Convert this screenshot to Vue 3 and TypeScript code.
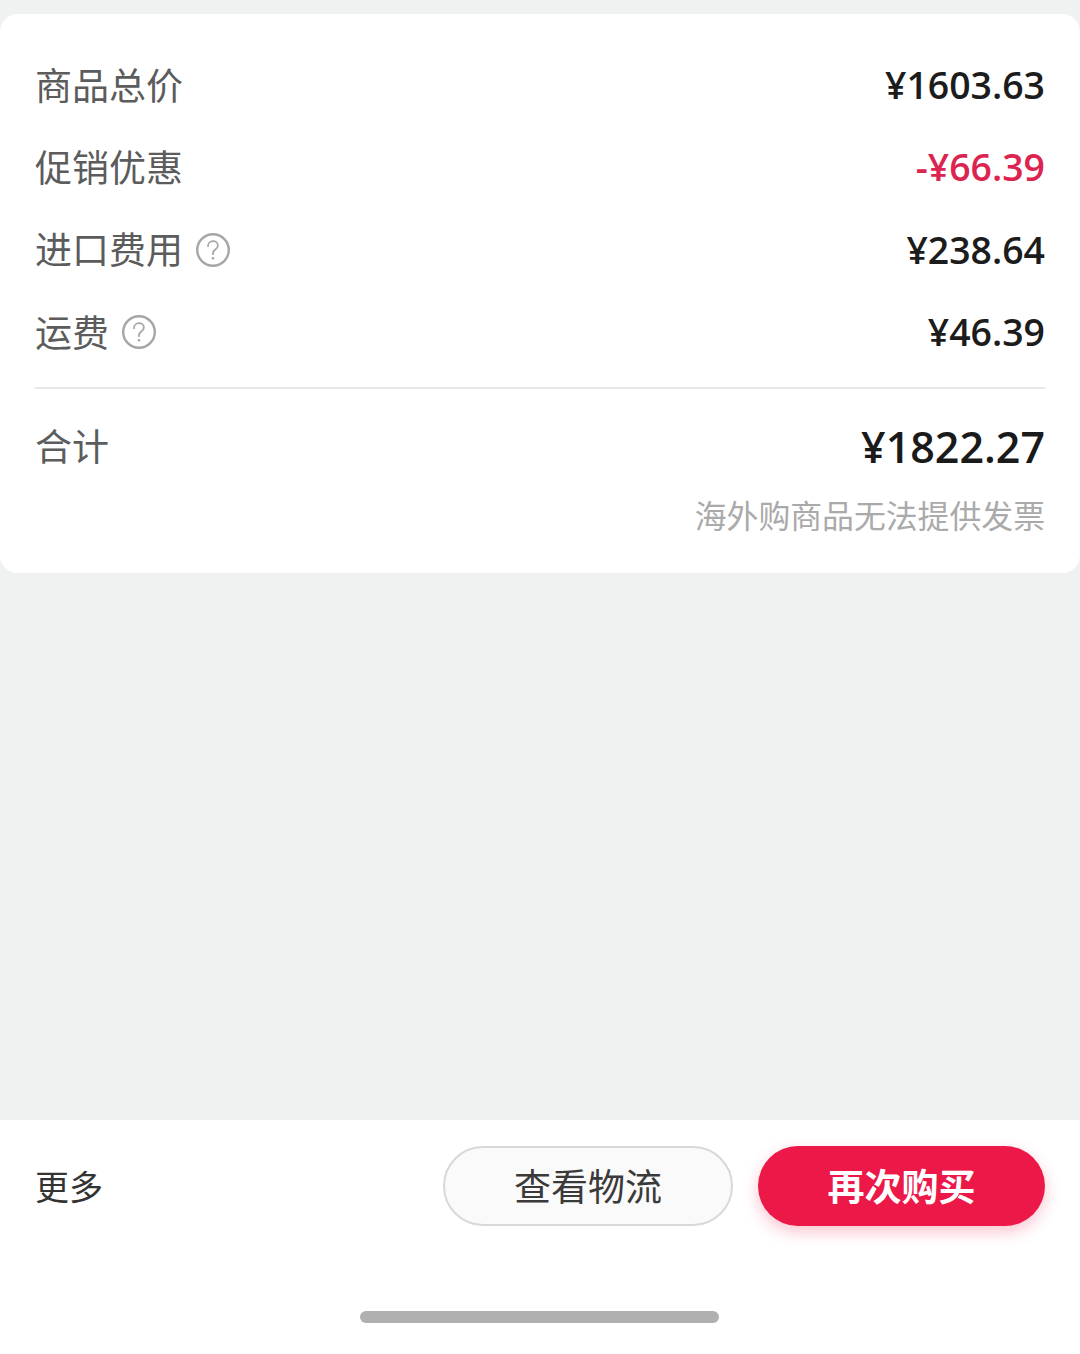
<script setup lang="ts">
interface FeeRow {
  label: string
  value: string
  help?: boolean
  discount?: boolean
}

const rows: FeeRow[] = [
  { label: '商品总价', value: '¥1603.63' },
  { label: '促销优惠', value: '-¥66.39', discount: true },
  { label: '进口费用', value: '¥238.64', help: true },
  { label: '运费', value: '¥46.39', help: true },
]
</script>

<template>
  <div class="page">
    <main class="content">
      <section class="card">
        <div class="rows">
          <div v-for="row in rows" :key="row.label" class="row">
            <div class="label">
              <span class="label-text">{{ row.label }}</span>
              <svg v-if="row.help" class="help" viewBox="0 0 34 34" aria-hidden="true">
                <circle cx="17" cy="17" r="15.800" fill="none" stroke="#a6a6a6" stroke-width="2.400" />
                <path d="M12 13.200c0-3 2.200-5 5-5 2.800 0 4.900 1.900 4.900 4.300 0 2-1.100 3-2.600 4.100-1.600 1.100-2.300 2-2.300 3.700v.9" fill="none" stroke="#a6a6a6" stroke-width="1.800" stroke-linecap="round" />
                <circle cx="17" cy="25.200" r="1.300" fill="#a6a6a6" />
              </svg>
            </div>
            <span class="value" :class="{ discount: row.discount }">{{ row.value }}</span>
          </div>
        </div>
        <div class="total">
          <div class="total-row">
            <span class="label"><span class="label-text">合计</span></span>
            <span class="total-value">¥1822.27</span>
          </div>
          <p class="note">海外购商品无法提供发票</p>
        </div>
      </section>
    </main>

    <footer class="footer">
      <div class="actions">
        <span class="more">更多</span>
        <div class="buttons">
          <button class="btn btn-outline" type="button"><span class="btn-text">查看物流</span></button>
          <button class="btn btn-primary" type="button"><span class="btn-text">再次购买</span></button>
        </div>
      </div>
      <div class="home-bar"></div>
    </footer>
  </div>
</template>

<style>
html,
body {
  margin: 0;
  background: #f0f1f1;
}
</style>

<style scoped>
.page {
  width: 1080px;
  height: 1354px;
  display: flex;
  flex-direction: column;
  overflow: hidden;
  background: #f0f1f1;
  font-family: "Open Sans", "Noto Sans CJK SC", sans-serif;
}

.content {
  flex: 1;
  padding-top: 14px;
}

.card {
  height: 559px;
  box-sizing: border-box;
  padding: 30px 35px 0 35px;
  background: #fff;
  border-radius: 18px;
}

.row {
  height: 82.300px;
  display: flex;
  align-items: center;
  justify-content: space-between;
}

.rows {
  padding-bottom: 14px;
  border-bottom: 2px solid #e8e8e8;
}

.label {
  display: flex;
  align-items: center;
  gap: 13px;
  font-size: 37px;
  color: #5c5c5c;
}

.label-text {
  padding-bottom: 3px;
}

.help {
  width: 34px;
  height: 34px;
  flex-shrink: 0;
}

.value {
  padding-bottom: 1px;
  font-size: 37.400px;
  font-weight: 600;
  color: #1c1c1c;
}

.value.discount {
  color: #dc2450;
}

.total {
  padding-top: 12px;
}

.total-row {
  height: 90px;
  display: flex;
  align-items: center;
  justify-content: space-between;
}

.total-value {
  font-size: 43px;
  font-weight: 600;
  color: #1a1a1a;
}

.note {
  margin: 0;
  padding-top: 3px;
  text-align: right;
  font-size: 31.850px;
  line-height: 44px;
  color: #aaa;
}

.footer {
  height: 234px;
  flex-shrink: 0;
  display: flex;
  flex-direction: column;
  background: #fff;
}

.actions {
  display: flex;
  align-items: center;
  justify-content: space-between;
  padding: 26px 35px 0 35px;
}

.more {
  padding-bottom: 2px;
  font-size: 34px;
  color: #333;
}

.buttons {
  display: flex;
  gap: 25px;
}

.btn {
  height: 80px;
  box-sizing: border-box;
  border-radius: 40px;
  font-family: inherit;
  font-size: 37px;
}

.btn-text {
  display: block;
  padding-bottom: 3px;
}

.btn-outline {
  width: 290px;
  border: 2px solid #d8d8d8;
  background: #fafafa;
  color: #3a3a3a;
}

.btn-primary {
  width: 287px;
  border: none;
  background: #eb1848;
  color: #fff;
  font-weight: 700;
  box-shadow: 0 6px 16px rgba(235, 24, 72, 0.25);
}

.home-bar {
  width: 359px;
  height: 12px;
  margin: 85px 0 0 360px;
  border-radius: 6px;
  background: #b0b0b0;
}
</style>
